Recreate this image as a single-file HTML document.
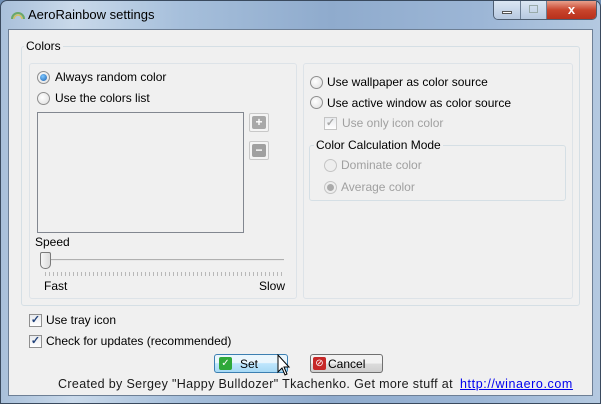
<!DOCTYPE html>
<html><head><meta charset="utf-8"><style>
*{margin:0;padding:0;box-sizing:border-box}
body{width:601px;height:404px;overflow:hidden;position:relative;font-family:"Liberation Sans",sans-serif;font-size:12px;color:#000;background:#6f8fb5}
.frame{position:absolute;left:0;top:0;width:601px;height:404px;border:1px solid #3a4a5e;border-radius:7px 7px 0 0;background:linear-gradient(90deg,#a9c0da 0%,#c9d9ea 12%,#a6bfdb 30%,#8fabcd 55%,#9cb6d6 80%,#b4c9e0 100%)}
.client{position:absolute;left:8px;top:29px;width:585px;height:367px;background:#f0f0f0;border:1px solid #6d7f95}
.a{position:absolute;white-space:nowrap}
.g{position:absolute;border:1px solid #d5dfe5;border-radius:3px}
.radio{position:absolute;width:13px;height:13px;border-radius:50%;border:1px solid #8f8f8f;background:radial-gradient(circle at 40% 40%,#fff,#ddd)}
.radio.on::after{content:"";position:absolute;left:2px;top:2px;width:7px;height:7px;border-radius:50%;background:radial-gradient(circle at 40% 35%,#7ec8ff,#1a5fb0)}
.radio.dis{border-color:#c4c4c4;background:#eee}
.radio.dis.on::after{background:#aaa}
.cb{position:absolute;width:13px;height:13px;border:1px solid #8f8f8f;background:linear-gradient(#e8eaed,#fff);font-size:11px;line-height:11px;text-align:center;color:#22427a;font-weight:bold}
.dis{color:#a0a0a0}
.btn{position:absolute;height:19px;border:1px solid #707070;border-radius:3px;background:linear-gradient(#f2f2f2 50%,#dcdcdc 50%,#cfcfcf)}
</style></head><body>
<div class="frame">
<svg class="a" style="left:9px;top:9px" width="16" height="10"><path d="M2 9 A6 6 0 0 1 14 9" fill="none" stroke="#6aa86a" stroke-width="2"/><path d="M4 9 A4 4 0 0 1 12 9" fill="none" stroke="#d6c060" stroke-width="1.5"/></svg>
<div class="a" style="left:27px;top:6px;font-size:13px;color:#000">AeroRainbow settings</div>
<div class="a" style="left:492px;top:0;width:104px;height:19px;border:1px solid #4e5e72;border-top:none;border-radius:0 0 5px 5px;overflow:hidden;display:flex">
<div style="width:27px;background:linear-gradient(#dbe6f3,#b7c9e0);border-right:1px solid #6b7d93;position:relative"><div style="position:absolute;left:8px;top:10px;width:10px;height:3px;background:#fff;border:1px solid #555"></div></div>
<div style="width:26px;background:linear-gradient(#dbe6f3,#b7c9e0);border-right:1px solid #6b7d93;position:relative"><div style="position:absolute;left:8px;top:4px;width:9px;height:8px;border:1px solid #9aa;"></div></div>
<div style="flex:1;background:linear-gradient(#e8a08c,#c9452d 50%,#b8301c);color:#fff;font-weight:bold;text-align:center;font-size:13px;line-height:17px">x</div>
</div>
</div>
<div class="client"></div>
<div class="g" style="left:21px;top:46px;width:559px;height:260px"></div>
<div class="a" style="left:24px;top:39px;background:#f0f0f0;padding:0 2px">Colors</div>
<div class="g" style="left:29px;top:63px;width:268px;height:236px;border-color:#dde3e8"></div>
<div class="g" style="left:303px;top:63px;width:270px;height:236px;border-color:#dde3e8"></div>
<div class="radio on" style="left:37px;top:71px"></div><div class="a" style="left:55px;top:70px">Always random color</div>
<div class="radio" style="left:37px;top:92px"></div><div class="a" style="left:55px;top:91px">Use the colors list</div>
<div class="a" style="left:37px;top:112px;width:207px;height:121px;border:1px solid #828790;background:#f0f0f0"></div>
<div class="a" style="left:249px;top:113px;width:20px;height:19px;border:1px solid #c8c8c8;border-radius:2px;background:#f4f4f4"><div style="margin:2px;width:14px;height:13px;background:#a8a8a8;border-radius:2px;color:#fff;font-weight:bold;text-align:center;line-height:13px">+</div></div>
<div class="a" style="left:249px;top:141px;width:20px;height:19px;border:1px solid #c8c8c8;border-radius:2px;background:#f4f4f4"><div style="margin:2px;width:14px;height:13px;background:#a0a0a0;border-radius:2px;color:#fff;font-weight:bold;text-align:center;line-height:12px">−</div></div>
<div class="a" style="left:35px;top:235px">Speed</div>
<div class="a" style="left:46px;top:259px;width:238px;height:2px;border-top:1px solid #b0b0b0;border-bottom:1px solid #e8e8e8"></div>
<div class="a" style="left:40px;top:252px;width:11px;height:17px;border:1px solid #7a7a7a;border-radius:2px 2px 5px 5px;background:linear-gradient(90deg,#f6f6f6,#dcdcdc)"></div>
<div class="a" style="left:45px;top:272px;width:238px;height:4px;background:repeating-linear-gradient(90deg,#b8b8b8 0 1px,transparent 1px 4px)"></div>
<div class="a" style="left:44px;top:279px">Fast</div>
<div class="a" style="left:259px;top:279px">Slow</div>
<div class="radio" style="left:310px;top:76px"></div><div class="a" style="left:327px;top:75px">Use wallpaper as color source</div>
<div class="radio" style="left:310px;top:96px"></div><div class="a" style="left:327px;top:96px">Use active window as color source</div>
<div class="cb dis" style="left:324px;top:117px;border-color:#c4c4c4;color:#aaa">✓</div><div class="a dis" style="left:342px;top:116px">Use only icon color</div>
<div class="g" style="left:309px;top:145px;width:257px;height:56px"></div>
<div class="a" style="left:314px;top:138px;background:#f0f0f0;padding:0 2px">Color Calculation Mode</div>
<div class="radio dis" style="left:324px;top:159px"></div><div class="a dis" style="left:341px;top:158px">Dominate color</div>
<div class="radio dis on" style="left:324px;top:181px"></div><div class="a dis" style="left:341px;top:180px">Average color</div>
<div class="cb" style="left:29px;top:314px">✓</div><div class="a" style="left:46px;top:313px">Use tray icon</div>
<div class="cb" style="left:29px;top:335px">✓</div><div class="a" style="left:46px;top:334px">Check for updates (recommended)</div>
<div class="btn" style="left:214px;top:354px;width:74px;border-color:#3c7fb1;background:linear-gradient(#eaf6fd 45%,#bee6fd 50%,#a7d9f5)"><div class="a" style="left:4px;top:2px;width:13px;height:13px;background:#2fa83a;border-radius:2px;color:#fff;font-size:10px;line-height:13px;text-align:center">✓</div><div class="a" style="left:25px;top:2px">Set</div></div>
<svg class="a" style="left:276px;top:354px" width="16" height="24"><path d="M2 1 L2 18 L6 14 L9 21 L11 20 L8 13 L13 13 Z" fill="#fff" stroke="#000"/></svg>
<div class="btn" style="left:310px;top:354px;width:73px"><div class="a" style="left:2px;top:2px;width:13px;height:13px;background:#c62828;border-radius:2px;color:#fff;font-size:10px;line-height:13px;text-align:center">⊘</div><div class="a" style="left:17px;top:2px">Cancel</div></div>
<div class="a" style="left:58px;top:377px;color:#1a1a1a;font-size:12.5px;letter-spacing:0.35px">Created by Sergey "Happy Bulldozer" Tkachenko. Get more stuff at</div>
<div class="a" style="left:460px;top:377px;color:#0000ee;text-decoration:underline;font-size:12.5px;letter-spacing:0.6px">http://winaero.com</div>
</body></html>
